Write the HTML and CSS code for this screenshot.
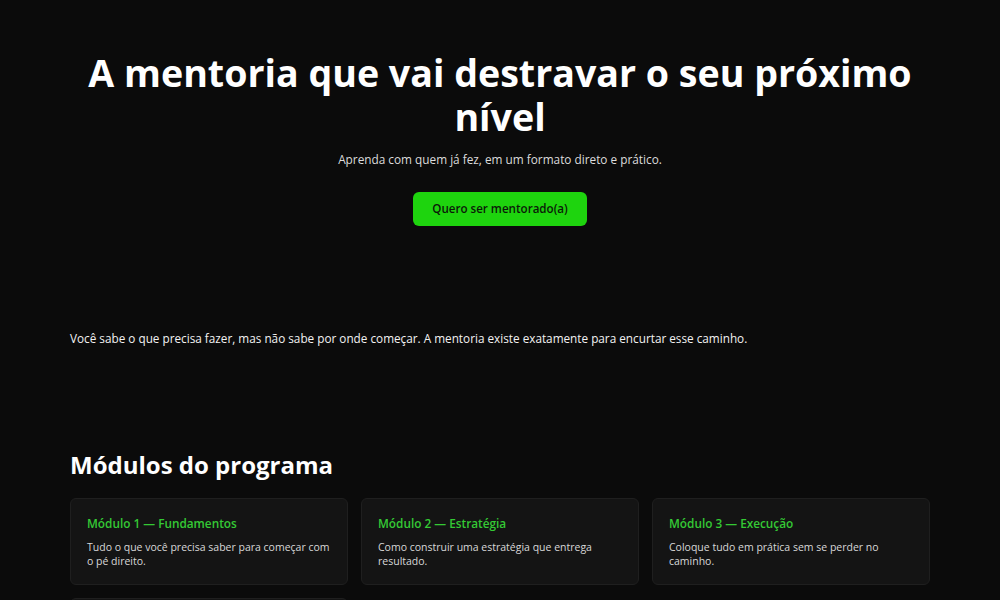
FILE: index.html
```html
<!DOCTYPE html>
<html lang="pt-BR">
<head>
<meta charset="utf-8">
<title>Mentoria</title>
<link rel="stylesheet" href="styles.css">
</head>
<body>
<section class="hero">
  <h1 class="hero-title">A mentoria que vai destravar o seu próximo nível</h1>
  <p class="hero-sub">Aprenda com quem já fez, em um formato direto e prático.</p>
  <a class="btn" href="#">Quero ser mentorado(a)</a>
</section>
<section class="intro">
  <p>Você sabe o que precisa fazer, mas não sabe por onde começar. A mentoria existe exatamente para encurtar esse caminho.</p>
</section>
<section class="modules">
  <h2 class="modules-title">Módulos do programa</h2>
  <div class="grid">
    <div class="card">
      <h3 class="card-title">Módulo 1 — Fundamentos</h3>
      <p class="card-text">Tudo o que você precisa saber para começar com o pé direito.</p>
    </div>
    <div class="card">
      <h3 class="card-title">Módulo 2 — Estratégia</h3>
      <p class="card-text">Como construir uma estratégia que entrega resultado.</p>
    </div>
    <div class="card">
      <h3 class="card-title">Módulo 3 — Execução</h3>
      <p class="card-text">Coloque tudo em prática sem se perder no caminho.</p>
    </div>
    <div class="card">
      <h3 class="card-title">Módulo 4 — Escala</h3>
      <p class="card-text">Como crescer de forma sustentável e consistente.</p>
    </div>
  </div>
</section>
</body>
</html>
```
FILE: styles.css
```css
* { box-sizing: border-box; }
html, body {
  margin: 0;
  background: #0b0b0b;
  color: #f2f2f2;
  font-family: "Open Sans", "Noto Sans", sans-serif;
}
.hero {
  text-align: center;
  padding: 51px 20px 0;
  height: 300px;
}
.hero-title {
  margin: 0 auto;
  max-width: 860px;
  font-size: 37.6px;
  line-height: 44px;
  font-weight: 700;
  color: #ffffff;
}
.hero-sub {
  margin: 11px 0 0;
  font-size: 11.8px;
  line-height: 18px;
  color: #dcdcdc;
}
.btn {
  display: inline-block;
  margin-top: 24px;
  width: 174px;
  height: 34px;
  line-height: 34px;
  border-radius: 6px;
  background: #1ed40e;
  color: #0b1a08;
  font-size: 11.6px;
  font-weight: 600;
  text-decoration: none;
}
.intro {
  max-width: 860px;
  margin: 0 auto;
  padding-top: 28px;
  height: 149px;
}
.intro p {
  margin: 0;
  font-size: 11.75px;
  line-height: 20px;
}
.modules {
  max-width: 860px;
  margin: 0 auto;
}
.modules-title {
  margin: 0 0 17px;
  font-size: 24px;
  line-height: 32px;
  font-weight: 700;
  color: #ffffff;
}
.grid {
  display: grid;
  grid-template-columns: repeat(3, 1fr);
  gap: 13px;
}
.card {
  background: #141414;
  border: 1px solid #1f1f1f;
  border-radius: 6px;
  padding: 15px 16px 16px;
  min-height: 86px;
}
.card-title {
  margin: 0 0 8px;
  font-size: 11.8px;
  line-height: 18px;
  font-weight: 600;
  color: #34c934;
}
.card-text {
  margin: 0;
  font-size: 10.5px;
  line-height: 14px;
  color: #d8d8d8;
}
```
